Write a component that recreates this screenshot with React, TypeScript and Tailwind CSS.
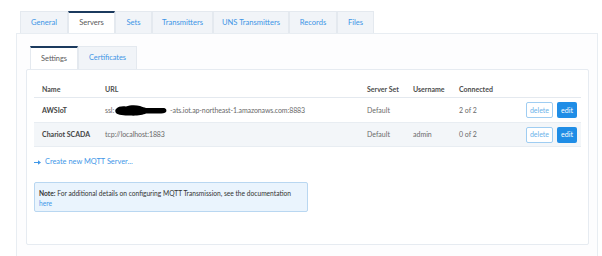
import React from "react";

const topTabs = [
    { label: "General", w: "w-[48px]" },
    { label: "Servers", w: "w-[47px]", active: true },
    { label: "Sets", w: "w-[37px]" },
    { label: "Transmitters", w: "w-[61px]" },
    { label: "UNS Transmitters", w: "w-[76px]" },
    { label: "Records", w: "w-[48px]" },
    { label: "Files", w: "w-[37px]" },
];

const servers = [
    { name: "AWSIoT", url: "aws", set: "Default", user: "", connected: "2 of 2" },
    { name: "Chariot SCADA", url: "tcp://localhost:1883", set: "Default", user: "admin", connected: "0 of 2" },
];

function Tab({ label, w, active }: { label: string; w: string; active?: boolean }) {
    if (active) {
        return (
            <div className={`${w} h-full flex items-center justify-center bg-white border-t-[2px] border-t-[#1b3a5e] border-x border-x-[#e4e9ef] text-[#5a5a5a] -mb-px`}>
                {label}
            </div>
        );
    }
    return (
        <div className={`${w} h-full flex items-center justify-center bg-[#f1f4f8] border border-[#e4e9ef] border-b-0 text-[#3d95e6]`}>
            {label}
        </div>
    );
}

// the blacked-out part of the AWS host name
function Redacted() {
    return (
        <svg width="56" height="11" viewBox="0 0 56 11" className="inline-block align-middle -my-[3px]">
            <path d="M2 4 C4 1.5 8 1 12 1.5 C16 0 22 0 26 1 C29 2 30 2.5 32 3 L49 3 C52 3 53 5 52 7 C51 8.5 48 8.5 45 8.5 L32 8.5 C29 10 22 11 16 10.5 C10 10.5 4 10 2 8 C1 6.5 1 5 2 4 Z" fill="#000" />
        </svg>
    );
}

function Arrow() {
    return (
        <svg width="7" height="5" viewBox="0 0 7 5" className="block">
            <path d="M0 2 L4 2 L4 0.3 L7 2.5 L4 4.7 L4 3 L0 3 Z" fill="#3f97e8" />
        </svg>
    );
}

export default function App() {
    return (
        <div className="w-[602px] h-[256px] bg-white overflow-hidden text-[7px] font-['Lato',_'Open_Sans',_sans-serif]">
            {/* top tabs */}
            <div className="flex ml-[20px] mt-[11px] h-[22px] text-[7.6px]">
                {topTabs.map(t => <Tab key={t.label} {...t} />)}
            </div>

            {/* outer panel */}
            <div className="ml-[16px] mr-[4px] h-[230px] border border-[#e8edf2] bg-[#fdfdfe] pl-[9px] pr-[8px] pt-[12px]">
                <div className="flex ml-[4px] h-[23px] text-[7.4px]">
                    <Tab label="Settings" w="w-[48px]" active />
                    <Tab label="Certificates" w="w-[59px]" />
                </div>

                <div className="h-[176px] bg-white border border-[#e6ebf1] rounded-[2px] px-[7px] pt-[11px]">
                    {/* table */}
                    <div className="grid grid-cols-[63px_262px_46px_46px_1fr] items-center h-[17px] pl-[8px] font-bold text-[#4d4d4d] border-b-[1.5px] border-[#e4e9ef]">
                        <div>Name</div>
                        <div>URL</div>
                        <div>Server Set</div>
                        <div>Username</div>
                        <div>Connected</div>
                    </div>
                    {servers.map((s, i) => (
                        <div
                            key={s.name}
                            className={`grid grid-cols-[63px_262px_46px_46px_1fr_auto] items-center ${i === 0 ? "h-[25px]" : "h-[24px] bg-[#f3f6f9]"} pl-[8px] pr-[4px] border-b border-[#e8edf2] text-[#6a6a6a]`}
                        >
                            <div className="font-bold text-[#444]">{s.name}</div>
                            <div className="whitespace-nowrap tracking-[-0.1px]">
                                {s.url === "aws" ? (
                                    <>ssl:<Redacted />-ats.iot.ap-northeast-1.amazonaws.com:8883</>
                                ) : s.url}
                            </div>
                            <div>{s.set}</div>
                            <div>{s.user}</div>
                            <div>{s.connected}</div>
                            <div className="flex gap-[4px]">
                                <button className="w-[27px] h-[16px] rounded-[2px] border border-[#9fcdf2] bg-white text-[#6ab2ea]">delete</button>
                                <button className="w-[20px] h-[16px] rounded-[2px] bg-[#1f8de6] text-white">edit</button>
                            </div>
                        </div>
                    ))}

                    <div className="flex items-center gap-[4px] mt-[9px] h-[12px] text-[7.4px] text-[#3f97e8]">
                        <Arrow />
                        <span>Create new MQTT Server...</span>
                    </div>

                    <div className="mt-[14px] w-[274px] h-[30px] bg-[#eaf4fd] border border-[#b9d7f1] rounded-[2px] px-[4px] pt-[5px] leading-[10px] text-[6.65px] text-[#333] whitespace-nowrap">
                        <div><span className="font-bold">Note:</span> For additional details on configuring MQTT Transmission, see the documentation</div>
                        <div className="text-[#3f97e8]">here</div>
                    </div>
                </div>
            </div>
        </div>
    );
}
